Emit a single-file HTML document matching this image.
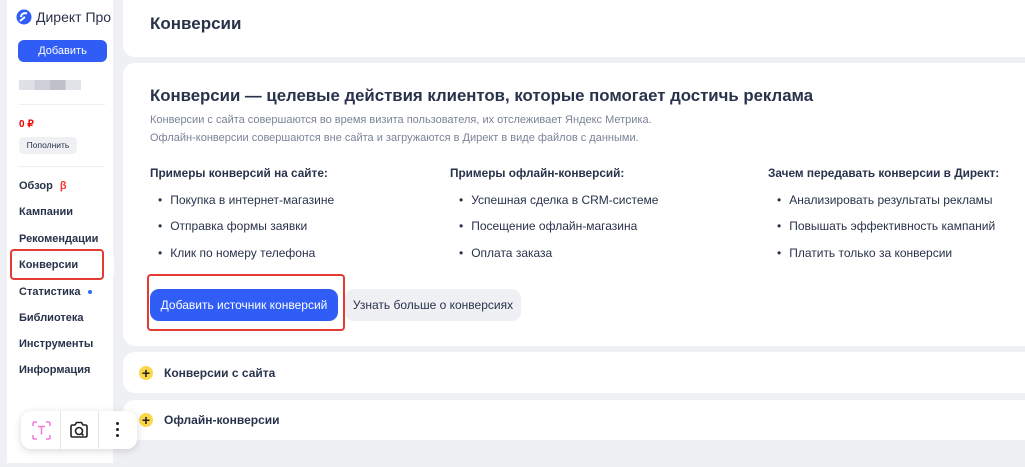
<!DOCTYPE html>
<html><head><meta charset="utf-8"><style>
*{box-sizing:border-box;margin:0;padding:0}
body{width:1025px;height:467px;overflow:hidden;background:#eff0f4;font-family:"Liberation Sans","Noto Sans CJK SC",sans-serif;color:#28324a;position:relative}
.abs{position:absolute}
.side{left:7px;top:0;width:106px;height:463px;background:#fff}
.card{background:#fff;border-radius:12px;position:absolute}
.nav{position:absolute;left:19px;font-size:11px;font-weight:bold;color:#28324a}
.h{font-size:11.8px;font-weight:bold;position:absolute}
.li{font-size:12px;position:absolute}
.li:before{content:"•";margin-right:8px}
.plus{position:absolute;width:14px;height:14px;border-radius:50%;background:#fcd74a;color:#222;font-size:14px;line-height:14px;text-align:center;font-weight:bold}
</style></head><body>
<div class="abs side"></div>
<svg class="abs" style="left:16px;top:9px" width="16" height="16" viewBox="0 0 16 16"><circle cx="8" cy="8" r="7.5" fill="#2f5df5"/><path d="M11 4.5C8 3.5 5 5 5 8" stroke="#fff" stroke-width="2" fill="none"/><path d="M4 12L9 8" stroke="#fff" stroke-width="2"/></svg>
<div class="abs" style="left:36px;top:9px;font-size:14px;color:#28324a">Директ Про</div>
<div class="abs" style="left:18px;top:40px;width:89px;height:22px;background:#2f5df5;border-radius:6px;color:#fff;font-size:11px;text-align:center;line-height:22px">Добавить</div>
<div class="abs" style="left:19px;top:80px;width:62px;height:10px;background:linear-gradient(90deg,#e0e1e6 0 25%,#cfd1d8 25% 50%,#bfc1c9 50% 75%,#e2e3e8 75%)"></div>
<div class="abs" style="left:19px;top:104px;width:86px;height:1px;background:#eceef2"></div>
<div class="abs" style="left:19px;top:119px;font-size:10px;font-weight:bold;color:#e00">0 ₽</div>
<div class="abs" style="left:19px;top:137px;width:58px;height:17px;background:#eef0f4;border-radius:5px;font-size:8.5px;text-align:center;line-height:17px">Пополнить</div>
<div class="abs" style="left:19px;top:166px;width:86px;height:1px;background:#eceef2"></div>
<div class="nav" style="top:180px">Обзор <span style="color:#f33;margin-left:4px">β</span></div>
<div class="nav" style="top:206px">Кампании</div>
<div class="nav" style="top:233px">Рекомендации</div>
<div class="abs" style="left:100px;top:250px;width:14px;height:30px;background:#fff;border-radius:0 8px 8px 0"></div>
<div class="abs" style="left:10px;top:249px;width:94px;height:31px;border:2.5px solid #e33b34;border-radius:4px"></div>
<div class="nav" style="top:259px">Конверсии</div>
<div class="nav" style="top:286px">Статистика <span style="display:inline-block;width:4px;height:4px;border-radius:50%;background:#2f6df5;margin-left:4px;vertical-align:middle"></span></div>
<div class="nav" style="top:312px">Библиотека</div>
<div class="nav" style="top:338px">Инструменты</div>
<div class="nav" style="top:364px">Информация</div>

<div class="card" style="left:123px;top:0;width:920px;height:57px;border-radius:0 0 0 12px"></div>
<div class="abs" style="left:150px;top:14px;font-size:17px;font-weight:bold">Конверсии</div>

<div class="card" style="left:123px;top:63px;width:920px;height:283px"></div>
<div class="abs" style="left:150px;top:86px;font-size:16.8px;font-weight:bold;white-space:nowrap">Конверсии — целевые действия клиентов, которые помогает достичь реклама</div>
<div class="abs" style="left:150px;top:112px;font-size:11px;color:#7b8398;line-height:17.5px">Конверсии с сайта совершаются во время визита пользователя, их отслеживает Яндекс Метрика.<br>Офлайн-конверсии совершаются вне сайта и загружаются в Директ в виде файлов с данными.</div>
<div class="h" style="left:150px;top:166px">Примеры конверсий на сайте:</div>
<div class="li" style="left:158px;top:193px">Покупка в интернет-магазине</div>
<div class="li" style="left:158px;top:219px">Отправка формы заявки</div>
<div class="li" style="left:158px;top:246px">Клик по номеру телефона</div>
<div class="h" style="left:450px;top:166px">Примеры офлайн-конверсий:</div>
<div class="li" style="left:459px;top:193px">Успешная сделка в CRM-системе</div>
<div class="li" style="left:459px;top:219px">Посещение офлайн-магазина</div>
<div class="li" style="left:459px;top:246px">Оплата заказа</div>
<div class="h" style="left:768px;top:166px">Зачем передавать конверсии в Директ:</div>
<div class="li" style="left:777px;top:193px">Анализировать результаты рекламы</div>
<div class="li" style="left:777px;top:219px">Повышать эффективность кампаний</div>
<div class="li" style="left:777px;top:246px">Платить только за конверсии</div>
<div class="abs" style="left:150px;top:289px;width:188px;height:32px;background:#2f5df5;border-radius:9px;color:#fff;font-size:12px;text-align:center;line-height:32px">Добавить источник конверсий</div>
<div class="abs" style="left:147px;top:274px;width:198px;height:57px;border:2.5px solid #e33b34;border-radius:4px"></div>
<div class="abs" style="left:345px;top:289px;width:176px;height:32px;background:#eef0f4;border-radius:9px;font-size:12px;text-align:center;line-height:32px">Узнать больше о конверсиях</div>

<div class="card" style="left:123px;top:352px;width:920px;height:41px"></div>
<div class="plus" style="left:139px;top:366px">+</div>
<div class="abs" style="left:164px;top:366px;font-size:12px;font-weight:bold">Конверсии с сайта</div>
<div class="card" style="left:123px;top:400px;width:920px;height:40px"></div>
<div class="plus" style="left:139px;top:413px">+</div>
<div class="abs" style="left:164px;top:413px;font-size:12px;font-weight:bold">Офлайн-конверсии</div>

<div class="abs" style="left:21px;top:411px;width:116px;height:38px;background:#fff;border-radius:10px;box-shadow:0 2px 8px rgba(0,0,0,.15)"></div>
<div class="abs" style="left:60px;top:411px;width:1px;height:38px;background:#e6e6e6"></div>
<div class="abs" style="left:98px;top:411px;width:1px;height:38px;background:#e6e6e6"></div>
<svg class="abs" style="left:32px;top:421px" width="19" height="19" viewBox="0 0 19 19" fill="none" stroke="#f07ad8" stroke-width="1.5"><path d="M1 5V2.5Q1 1 2.5 1H5M14 1h2.5Q18 1 18 2.5V5M18 14v2.5Q18 18 16.5 18H14M5 18H2.5Q1 18 1 16.5V14M6 5.5h7M9.5 5.5v8"/></svg>
<svg class="abs" style="left:69px;top:421px" width="20" height="18" viewBox="0 0 20 18" fill="none" stroke="#222" stroke-width="1.6"><path d="M2 5.5Q2 4 3.5 4H6l1.5-2.5h5L14 4h2.5Q18 4 18 5.5v9Q18 16 16.5 16h-13Q2 16 2 14.5z"/><circle cx="10" cy="10" r="3.5"/><path d="M12.5 12.5l2 2"/></svg>
<div class="abs" style="left:116px;top:422px;width:3px;height:3px;border-radius:50%;background:#222;box-shadow:0 6px 0 #222,0 12px 0 #222"></div>
</body></html>
